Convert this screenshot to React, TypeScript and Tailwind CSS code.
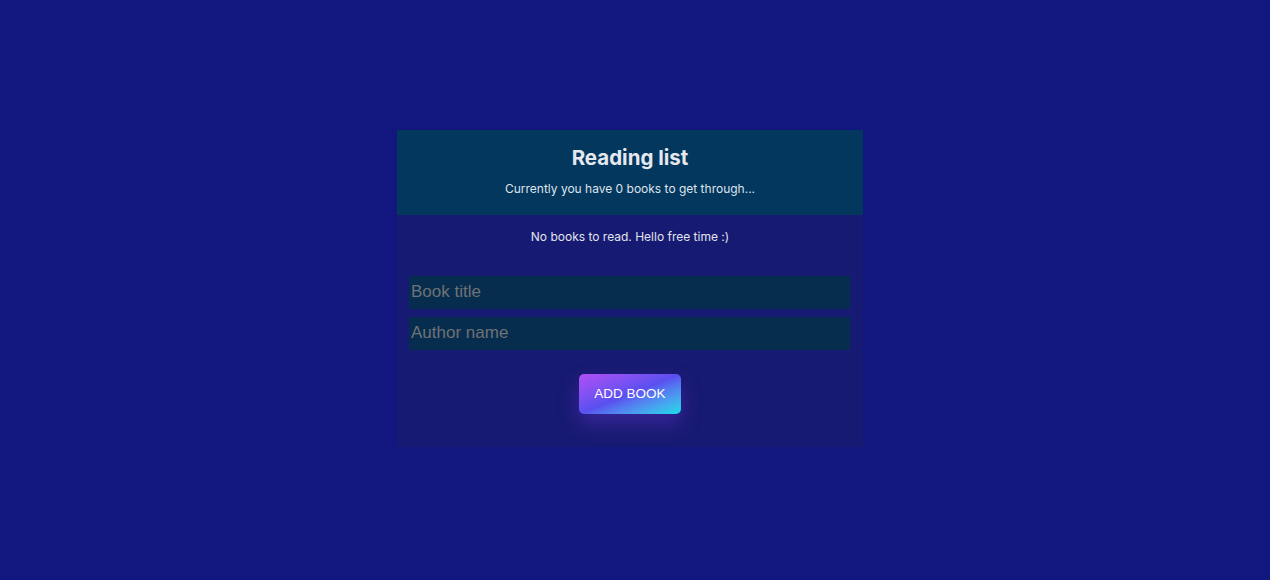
export default function App() {
  return (
    <div className="min-h-[580px] w-full bg-[#11177f] flex justify-start pl-[397px] pt-[130px]" style={{ fontFamily: 'Inter, "Liberation Sans", sans-serif' }}>
      <div className="w-[466px] h-[317px] bg-[#171a72] flex flex-col">
        <div className="h-[85px] bg-[#03375e] flex flex-col items-center pt-[15px]">
          <h1 className="text-[20.5px] leading-[26px] font-bold text-[#e6e8ef]">Reading list</h1>
          <p className="mt-[9px] text-[12px] leading-[18px] text-[#dfe3ec]">Currently you have 0 books to get through...</p>
        </div>
        <p className="mt-[13px] text-center text-[12px] leading-[18px] text-[#e2e4ee]">No books to read. Hello free time :)</p>
        <div className="mt-[30px] pl-[12px] pr-[13px] flex flex-col gap-[8px]">
          <input
            placeholder="Book title"
            className="h-[33px] w-full bg-[#062d4d] px-[2px] pb-[1px] text-[17px] text-[#cfd3dc] placeholder:text-[#6f7276] outline-none"
            style={{ fontFamily: '"Liberation Sans", Arial, sans-serif' }}
          />
          <input
            placeholder="Author name"
            className="h-[33px] w-full bg-[#062d4d] px-[2px] pb-[1px] text-[17px] text-[#cfd3dc] placeholder:text-[#6f7276] outline-none"
            style={{ fontFamily: '"Liberation Sans", Arial, sans-serif' }}
          />
        </div>
        <div className="mt-[24px] flex justify-center">
          <button
            className="w-[102px] h-[40px] rounded-[5px] bg-gradient-to-br from-[#b04ef5] via-[#5a4ff0] to-[#02dde8] text-white text-[13.5px] shadow-[0_10px_20px_rgba(120,60,220,0.35)]"
            style={{ fontFamily: '"Liberation Sans", Arial, sans-serif' }}
          >
            ADD BOOK
          </button>
        </div>
      </div>
    </div>
  );
}
